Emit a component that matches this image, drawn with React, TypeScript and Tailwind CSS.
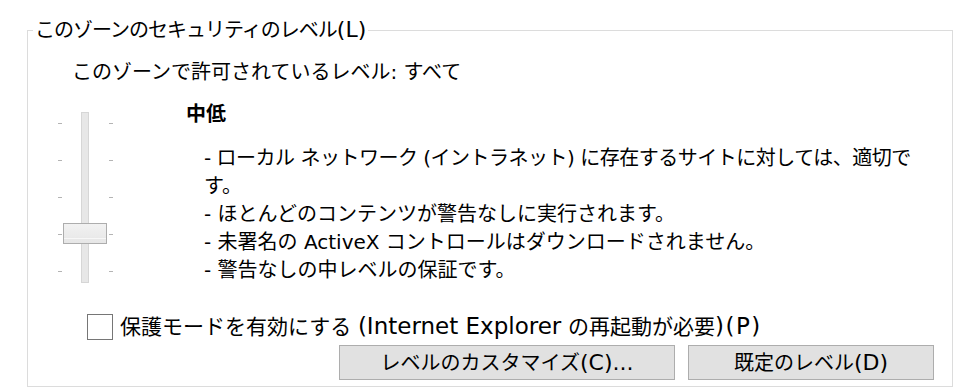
import React from 'react';

const ticks = [0, 1, 2, 3, 4];

const lines = [
  '- ローカル ネットワーク (イントラネット) に存在するサイトに対しては、適切で',
  'す。',
  '- ほとんどのコンテンツが警告なしに実行されます。',
  '- 未署名の ActiveX コントロールはダウンロードされません。',
  '- 警告なしの中レベルの保証です。',
];

function TickColumn() {
  return (
    <div className="flex w-[4px] flex-col gap-[36px] pt-[11px]">
      {ticks.map((t) => (
        <div key={t} className="h-px w-[4px] bg-[#b4b4b4]" />
      ))}
    </div>
  );
}

function LevelSlider() {
  return (
    <div className="relative flex h-[171px] w-[55px]">
      <TickColumn />
      <div className="ml-[19px] h-[171px] w-[8px] border border-[#d6d6d6] bg-[#e7e7e7]" />
      <div className="ml-[20px]">
        <TickColumn />
      </div>
      <div className="absolute left-[5px] top-[111px] flex h-[21px] w-[44px] flex-col justify-end border border-[#adadad] bg-gradient-to-b from-[#f2f2f2] to-[#e6e6e6] pb-[4px]">
        <div className="h-px w-full bg-[#f7f7f7]" />
      </div>
    </div>
  );
}

// Latin runs render a little larger, like Meiryo UI's Latin glyphs
function Lat({ children, big }: { children: React.ReactNode; big?: boolean }) {
  return (
    <span className={big ? 'text-[23px] leading-[28px]' : 'text-[22px] leading-[28px]'}>
      {children}
    </span>
  );
}

export default function App() {
  return (
    <div className="h-[388px] w-[960px] bg-white pl-[27px] pt-[18px] text-[20px] text-black [font-family:'DejaVu_Sans','Noto_Sans_CJK_JP',sans-serif]">
      <fieldset className="w-[926px] border border-[#dcdcdc] pb-[6px]">
        <legend className="ml-[5px] px-[2px] leading-[24px]">
          <span className="tracking-[-1px]">このゾーンのセキュリティのレベル</span>
          <span className="text-[22px] leading-[24px]">(L)</span>
        </legend>
        <div className="mt-[16px] pl-[44px] leading-[28px]">
          このゾーンで許可されているレベル: すべて
        </div>
        <div className="mt-[14px] flex">
          <div className="ml-[30px] pt-[12px]">
            <LevelSlider />
          </div>
          <div className="ml-[73px] leading-[28px]">
            <div className="font-bold">中低</div>
            <div className="mt-[16px] pl-[18px]">
              {lines.map((l, i) => (
                <div key={l} className={i === 0 ? 'whitespace-nowrap tracking-[-0.5px]' : 'whitespace-nowrap'}>
                  {l}
                </div>
              ))}
            </div>
          </div>
        </div>
        <label className="ml-[59px] mt-[28px] flex items-center gap-[7px]">
          <span className="h-[26px] w-[26px] border border-[#767676] bg-white" />
          <span className="text-[21px] leading-[28px]">
            保護モードを有効にする <Lat big>(Internet Explorer</Lat> の再起動が必要
            <Lat big>
              <span className="tracking-[1.5px]">)(P</span>)
            </Lat>
          </span>
        </label>
        <div className="mt-[4px] flex justify-end gap-[13px] pr-[18px]">
          <button className="h-[35px] w-[336px] border border-[#adadad] bg-[#e1e1e1] leading-[28px]">
            レベルのカスタマイズ<Lat>(C)...</Lat>
          </button>
          <button className="h-[35px] w-[246px] border border-[#adadad] bg-[#e1e1e1] leading-[28px]">
            既定のレベル<Lat>(D)</Lat>
          </button>
        </div>
      </fieldset>
    </div>
  );
}
